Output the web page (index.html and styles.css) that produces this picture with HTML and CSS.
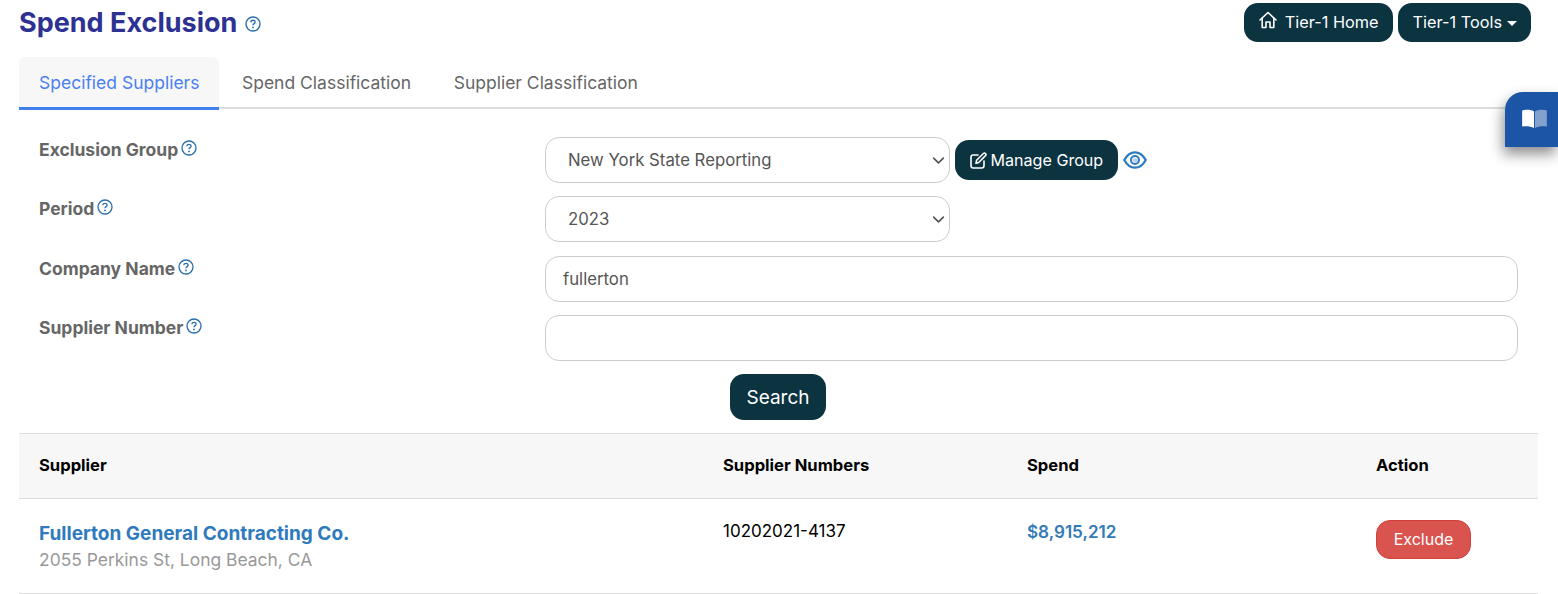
FILE: index.html
```html
<!DOCTYPE html>
<html lang="en">
<head>
    <meta charset="UTF-8">
    <meta name="viewport" content="width=device-width, initial-scale=1.0">
    <title>Spend Exclusion</title>
    <link rel="stylesheet" href="styles.css">
</head>
<body>
    <div class="guide-tab">
        <svg class="book-icon" width="25" height="19" viewBox="0 0 26 20">
            <path d="M0 1.500C4.500 .4 9.500 .8 12.500 2.500V20C9.500 18.300 4.500 17.900 0 18.500Z" fill="#fff"/>
            <path d="M26 1.500C21.500 .4 16.500 .8 13.500 2.500V20C16.500 18.300 21.500 17.900 26 18.500Z" fill="#fff" opacity="0.45"/>
        </svg>
    </div>

    <div class="page">
        <header class="page-header">
            <h1>Spend Exclusion
                <svg class="help-icon" width="16" height="16" viewBox="0 0 16 16">
                    <circle cx="8" cy="8" r="7" fill="none" stroke="#2a6eab" stroke-width="1.400"/>
                    <path d="M5.900 6.300C5.900 5 6.900 4.300 8 4.300S10.100 5 10.100 6.200C10.100 7.600 8 7.700 8 9.300" fill="none" stroke="#2a6eab" stroke-width="1.400"/>
                    <circle cx="8" cy="11.400" r=".9" fill="#2a6eab"/>
                </svg>
            </h1>
            <div class="header-buttons">
                <button class="btn btn-home">
                    <svg width="18" height="18" viewBox="0 0 18 18" fill="none" stroke="#fff" stroke-width="1.600" stroke-linejoin="round" stroke-linecap="round">
                        <path d="M1 9 9 1.500 17 9"/>
                        <path d="M3.200 7V16.500H7V11H11V16.500H14.800V7"/>
                    </svg>
                    Tier-1 Home
                </button>
                <button class="btn btn-tools">Tier-1 Tools <span class="caret"></span></button>
            </div>
        </header>

        <nav class="tabs">
            <a class="tab active">Specified Suppliers</a>
            <a class="tab">Spend Classification</a>
            <a class="tab">Supplier Classification</a>
        </nav>

        <form class="filter-form">
            <label class="field-label">Exclusion Group
                <svg class="help-icon" width="16" height="16" viewBox="0 0 16 16">
                    <circle cx="8" cy="8" r="7" fill="none" stroke="#2a6eab" stroke-width="1.300"/>
                    <path d="M5.900 6.300C5.900 5 6.900 4.300 8 4.300S10.100 5 10.100 6.200C10.100 7.600 8 7.700 8 9.300" fill="none" stroke="#2a6eab" stroke-width="1.300"/>
                    <circle cx="8" cy="11.400" r=".9" fill="#2a6eab"/>
                </svg>
            </label>
            <div class="field-control">
                <select class="input select-input"><option>New York State Reporting</option></select>
                <button type="button" class="btn btn-manage">
                    <svg width="17" height="17" viewBox="0 0 17 17" fill="none" stroke="#fff" stroke-width="1.600" stroke-linecap="round" stroke-linejoin="round">
                        <path d="M8 3H3.200C2 3 1 4 1 5.200V13.800C1 15 2 16 3.200 16H11.800C13 16 14 15 14 13.800V9"/>
                        <path d="M6 11.200 6.600 8.300 13.400 1.500C14 .9 14.800 .9 15.400 1.500S16.100 3 15.500 3.600L8.700 10.500Z"/>
                    </svg>
                    Manage Group
                </button>
                <svg class="eye-icon" width="24" height="18" viewBox="0 0 24 18" fill="none" stroke="#2e7cc0" stroke-width="2.300">
                    <path d="M1.300 9C4 4 8 1.300 12 1.300S20 4 22.700 9C20 14 16 16.700 12 16.700S4 14 1.300 9Z"/>
                    <circle cx="12" cy="9" r="4" stroke-width="2"/>
                    <path d="M9.800 9A3 3 0 0 0 14.500 11 2.500 2.500 0 0 0 13 7.500 2 2 0 0 0 9.800 9Z" fill="#2e7cc0" fill-opacity=".35" stroke="none"/>
                </svg>
            </div>

            <label class="field-label">Period
                <svg class="help-icon" width="16" height="16" viewBox="0 0 16 16">
                    <circle cx="8" cy="8" r="7" fill="none" stroke="#2a6eab" stroke-width="1.300"/>
                    <path d="M5.900 6.300C5.900 5 6.900 4.300 8 4.300S10.100 5 10.100 6.200C10.100 7.600 8 7.700 8 9.300" fill="none" stroke="#2a6eab" stroke-width="1.300"/>
                    <circle cx="8" cy="11.400" r=".9" fill="#2a6eab"/>
                </svg>
            </label>
            <div class="field-control">
                <select class="input select-input"><option>2023</option></select>
            </div>

            <label class="field-label">Company Name
                <svg class="help-icon" width="16" height="16" viewBox="0 0 16 16">
                    <circle cx="8" cy="8" r="7" fill="none" stroke="#2a6eab" stroke-width="1.300"/>
                    <path d="M5.900 6.300C5.900 5 6.900 4.300 8 4.300S10.100 5 10.100 6.200C10.100 7.600 8 7.700 8 9.300" fill="none" stroke="#2a6eab" stroke-width="1.300"/>
                    <circle cx="8" cy="11.400" r=".9" fill="#2a6eab"/>
                </svg>
            </label>
            <div class="field-control">
                <input class="input text-input" type="text" value="fullerton">
            </div>

            <label class="field-label">Supplier Number
                <svg class="help-icon" width="16" height="16" viewBox="0 0 16 16">
                    <circle cx="8" cy="8" r="7" fill="none" stroke="#2a6eab" stroke-width="1.300"/>
                    <path d="M5.900 6.300C5.900 5 6.900 4.300 8 4.300S10.100 5 10.100 6.200C10.100 7.600 8 7.700 8 9.300" fill="none" stroke="#2a6eab" stroke-width="1.300"/>
                    <circle cx="8" cy="11.400" r=".9" fill="#2a6eab"/>
                </svg>
            </label>
            <div class="field-control">
                <input class="input text-input" type="text">
            </div>
        </form>

        <div class="search-row">
            <button class="btn btn-search">Search</button>
        </div>

        <table class="results">
            <colgroup>
                <col class="col-supplier">
                <col class="col-numbers">
                <col class="col-spend">
                <col class="col-action">
            </colgroup>
            <thead>
                <tr>
                    <th>Supplier</th>
                    <th>Supplier Numbers</th>
                    <th>Spend</th>
                    <th>Action</th>
                </tr>
            </thead>
            <tbody>
                <tr>
                    <td>
                        <a class="supplier-name">Fullerton General Contracting Co.</a>
                        <div class="supplier-address">2055 Perkins St, Long Beach, CA</div>
                    </td>
                    <td class="numbers-cell">10202021-4137</td>
                    <td class="spend-cell">$8,915,212</td>
                    <td class="action-cell"><button class="btn-exclude">Exclude</button></td>
                </tr>
            </tbody>
        </table>
    </div>
</body>
</html>
```

FILE: styles.css
```css
* {
    margin: 0;
    padding: 0;
    box-sizing: border-box;
}

html, body {
    height: 594px;
    overflow: hidden;
}

body {
    font-family: 'Inter', 'Liberation Sans', sans-serif;
    background: #fff;
    color: #666;
}

.page {
    padding: 0 20px 0 19px;
}

.page-header {
    display: flex;
    justify-content: space-between;
    align-items: flex-start;
    height: 57px;
    padding-top: 3px;
}

h1 {
    font-size: 27px;
    font-weight: 700;
    line-height: 39px;
    color: #2d3192;
    display: flex;
    align-items: center;
    gap: 8px;
}

h1 .help-icon {
    margin-top: 3px;
}

.header-buttons {
    display: flex;
    gap: 5px;
    margin-right: 7px;
}

.btn {
    font-family: inherit;
    font-size: 16.3px;
    color: #fff;
    background: #0c3340;
    border: none;
    border-radius: 14px;
    height: 39px;
    padding: 0 15px;
    display: flex;
    align-items: center;
    gap: 6px;
    cursor: pointer;
}

.btn-home {
    padding: 0 14px 2px 15px;
    gap: 8px;
}

.btn-home svg {
    margin-top: -4px;
}

.btn-tools {
    padding: 0 14px 2px 15px;
}

.caret {
    width: 0;
    height: 0;
    border-top: 5px solid #fff;
    border-left: 5px solid transparent;
    border-right: 5px solid transparent;
    margin-top: 3px;
    margin-left: -1px;
}

.tabs {
    display: flex;
    border-bottom: 2px solid #ddd;
    height: 52px;
}

.tab {
    font-size: 17.5px;
    line-height: 51px;
    padding: 0 20px;
    margin-right: 2.5px;
    height: 53px;
    color: #666;
    border-radius: 6px 6px 0 0;
}

.tab.active {
    background: #f7f7f7;
    color: #4a7ff0;
    border-bottom: 3px solid #4080ee;
}

.filter-form {
    display: grid;
    grid-template-columns: 526px 1fr;
    row-gap: 13.4px;
    padding: 28px 0 0;
}

.field-label {
    font-size: 17.5px;
    font-weight: 700;
    color: #666;
    padding: 1px 0 0 20px;
    display: flex;
    align-items: flex-start;
    gap: 3px;
    line-height: 24px;
}

.field-label .help-icon {
    margin-top: 2px;
}

.field-control {
    display: flex;
    align-items: center;
    padding-right: 20px;
}

.input {
    font-family: inherit;
    font-size: 16.75px;
    color: #555;
    height: 46px;
    background: #fff;
    border: 1px solid #ccc;
    border-radius: 14px;
    outline: none;
}

.select-input {
    appearance: none;
    width: 405px;
    padding: 0 22px;
    background-image: url("data:image/svg+xml,%3Csvg xmlns='http://www.w3.org/2000/svg' viewBox='0 0 16 16'%3E%3Cpath fill='none' stroke='%23555' stroke-linecap='round' stroke-linejoin='round' stroke-width='2' d='m2 5 6 6 6-6'/%3E%3C/svg%3E");
    background-repeat: no-repeat;
    background-position: right 3px center;
    background-size: 15px 13px;
}

.text-input {
    width: 100%;
    padding: 0 17px;
}

.btn-manage {
    margin-left: 5px;
    height: 40px;
    padding: 0 14.5px 0 15px;
    gap: 3.5px;
    font-size: 16.1px;
}

.eye-icon {
    margin-left: 5px;
}

.search-row {
    display: flex;
    justify-content: center;
    padding: 13px 1px 13px 0;
}

.btn-search {
    font-size: 19px;
    height: 46px;
    padding: 0 16px;
}

.results {
    width: 100%;
    table-layout: fixed;
    border-collapse: collapse;
}

.col-supplier { width: 684px; }
.col-numbers { width: 304px; }
.col-spend { width: 349px; }
.col-action { width: 182px; }

.results th {
    text-align: left;
    font-size: 16.6px;
    font-weight: 700;
    color: #000;
    background: #f7f7f7;
    height: 65px;
    padding: 0 20px 2px;
    border-top: 1px solid #ddd;
    border-bottom: 1px solid #ddd;
}

.results td {
    height: 95px;
    padding: 20px 20px 0;
    vertical-align: top;
    border-bottom: 1px solid #ddd;
}

.supplier-name {
    display: block;
    font-size: 19px;
    font-weight: 700;
    line-height: 30px;
    color: #2f7abd;
}

.supplier-address {
    font-size: 17.45px;
    line-height: 21px;
    color: #999;
}

.numbers-cell {
    font-size: 17px;
    line-height: 24px;
    color: #000;
}

.spend-cell {
    font-size: 17.1px;
    font-weight: 600;
    line-height: 25px;
    color: #337ab7;
}

.btn-exclude {
    font-family: inherit;
    font-size: 16px;
    color: #fff;
    background: #d9534f;
    border: 1px solid #d43f3a;
    border-radius: 14px;
    width: 95px;
    height: 39px;
    margin-top: 1px;
    padding-bottom: 2px;
    cursor: pointer;
}

.guide-tab {
    position: absolute;
    top: 92px;
    right: 0;
    width: 53px;
    height: 55px;
    padding: 0 0 2px 6px;
    background: #1c55a5;
    border-radius: 18px 0 0 0;
    box-shadow: -2px 7px 14px rgba(0, 0, 0, 0.45);
    display: flex;
    align-items: center;
    justify-content: center;
}
```
